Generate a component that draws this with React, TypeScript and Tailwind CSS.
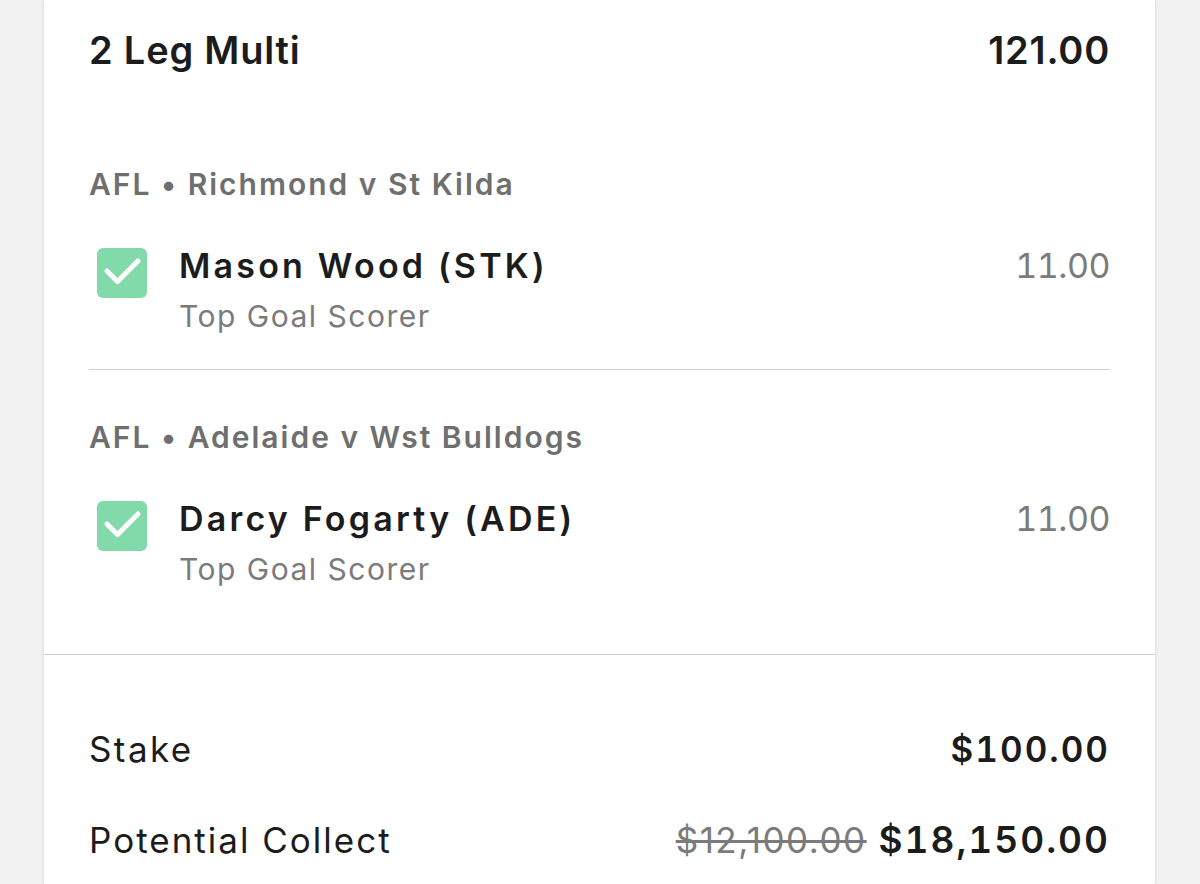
import React from 'react';

interface Leg {
  match: string;
  selection: string;
  market: string;
  odds: string;
}

const legs: Leg[] = [
  { match: 'AFL • Richmond v St Kilda', selection: 'Mason Wood (STK)', market: 'Top Goal Scorer', odds: '11.00' },
  { match: 'AFL • Adelaide v Wst Bulldogs', selection: 'Darcy Fogarty (ADE)', market: 'Top Goal Scorer', odds: '11.00' },
];

function CheckBox() {
  return (
    <div className="mt-[2px] ml-2 w-[50px] h-[50px] shrink-0 rounded-[6px] bg-[#82d9aa] flex items-center justify-center">
      <svg width="50" height="50" viewBox="0 0 50 50" fill="none">
        <path d="M10 23 L20.5 33.5 L41 13" stroke="white" strokeWidth="5" strokeLinecap="round" strokeLinejoin="round" />
      </svg>
    </div>
  );
}

function LegItem({ leg }: { leg: Leg }) {
  return (
    <div>
      <div className="text-[30px] leading-[36px] font-semibold tracking-[2px] text-[#6f6f6f]">{leg.match}</div>
      <div className="mt-[44px] flex">
        <CheckBox />
        <div className="ml-[32px] flex-1">
          <div className="flex justify-between">
            <span className="text-[34px] leading-[40px] font-semibold tracking-[3.2px] text-[#1c1c1c]">{leg.selection}</span>
            <span className="text-[34px] leading-[40px] tabular-nums tracking-[-0.5px] text-[#7b7b7b]">{leg.odds}</span>
          </div>
          <div className="mt-[12px] text-[30px] leading-[36px] tracking-[1.5px] text-[#7b7b7b]">{leg.market}</div>
        </div>
      </div>
    </div>
  );
}

export default function App() {
  return (
    <div className="min-h-screen bg-[#f2f2f2] font-['Inter',sans-serif] flex justify-center">
      <div className="w-[1111px] ml-[-1px] min-h-screen bg-white shadow-[0_0_4px_rgba(0,0,0,0.12)]">
        <div className="px-[45px] pt-[26px] pb-[67px]">
          <div className="flex justify-between text-[38px] leading-[48px] font-semibold tracking-[0.8px] text-[#1c1c1c]">
            <span>2 Leg Multi</span>
            <span>121.00</span>
          </div>
          <div className="mt-[92px]">
            <LegItem leg={legs[0]} />
          </div>
          <div className="mt-[35px] h-px bg-[#d2d2d2]" />
          <div className="mt-[49px]">
            <LegItem leg={legs[1]} />
          </div>
        </div>
        <div className="border-t border-[#cfcfcf] px-[45px] pt-[73px]">
          <div className="flex justify-between items-baseline text-[35px] leading-[42px] tracking-[2.4px] text-[#1c1c1c]">
            <span>Stake</span>
            <span className="font-semibold tabular-nums tracking-[2px]">$100.00</span>
          </div>
          <div className="mt-[49px] flex justify-between items-baseline text-[35px] leading-[42px] tracking-[2px] text-[#1c1c1c]">
            <span>Potential Collect</span>
            <span>
              <span className="line-through text-[#7b7b7b] tracking-[1.5px]">$12,100.00</span>{' '}
              <span className="font-semibold tabular-nums text-[37px] tracking-[2px]">$18,150.00</span>
            </span>
          </div>
        </div>
      </div>
    </div>
  );
}
